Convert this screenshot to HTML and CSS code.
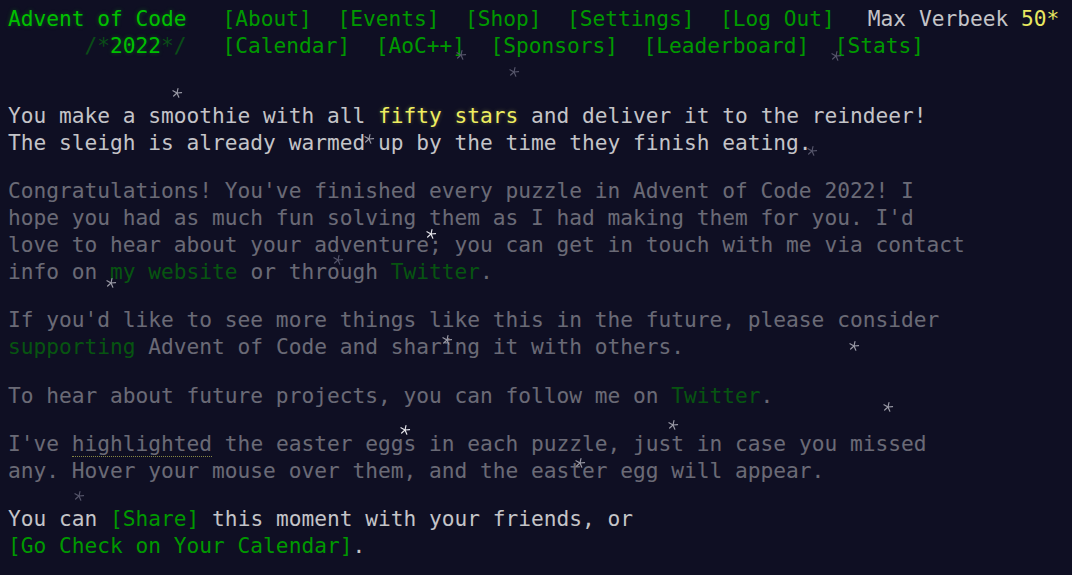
FILE: index.html
```html
<!DOCTYPE html>
<html lang="en">
<head>
<meta charset="utf-8">
<title>Advent of Code 2022</title>
<link rel="stylesheet" href="styles.css">
</head>
<body>
<svg class="defs" width="0" height="0" aria-hidden="true">
  <defs>
    <symbol id="flake" viewBox="-6 -6 12 12">
      <g stroke="currentColor" stroke-width="1.3" stroke-linecap="round">
        <line x1="0" y1="0" x2="0" y2="-5"/>
        <line x1="0" y1="0" x2="4.8" y2="-1.5"/>
        <line x1="0" y1="0" x2="2.9" y2="4"/>
        <line x1="0" y1="0" x2="-2.9" y2="4"/>
        <line x1="0" y1="0" x2="-4.8" y2="-1.5"/>
      </g>
    </symbol>
  </defs>
</svg>
<header>
  <div class="head-row">
    <h1 class="title"><a href="#" class="glow">Advent of Code</a></h1>
    <nav>
      <ul class="nav">
        <li><a href="#">[About]</a></li>
        <li><a href="#">[Events]</a></li>
        <li><a href="#">[Shop]</a></li>
        <li><a href="#">[Settings]</a></li>
        <li><a href="#">[Log Out]</a></li>
      </ul>
    </nav>
    <div class="user">Max Verbeek <span class="star-count">50*</span></div>
  </div>
  <div class="head-row">
    <h1 class="title event"><span class="wrap">/*</span><a href="#" class="glow">2022</a><span class="wrap">*/</span></h1>
    <nav>
      <ul class="nav">
        <li><a href="#">[Calendar]</a></li>
        <li><a href="#">[AoC++]</a></li>
        <li><a href="#">[Sponsors]</a></li>
        <li><a href="#">[Leaderboard]</a></li>
        <li><a href="#">[Stats]</a></li>
      </ul>
    </nav>
  </div>
</header>
<main>
  <article>
    <p>You make a smoothie with all <em class="star">fifty stars</em> and deliver it to the reindeer! The sleigh is already warmed up by the time they finish eating.</p>
    <p class="quiet">Congratulations! You've finished every puzzle in Advent of Code 2022! I hope you had as much fun solving them as I had making them for you. I'd love to hear about your adventure; you can get in touch with me via contact info on <a href="#">my website</a> or through <a href="#">Twitter</a>.</p>
    <p class="quiet">If you'd like to see more things like this in the future, please consider <a href="#">supporting</a> Advent of Code and sharing it with others.</p>
    <p class="quiet">To hear about future projects, you can follow me on <a href="#">Twitter</a>.</p>
    <p class="quiet">I've <span class="egg">highlighted</span> the easter eggs in each puzzle, just in case you missed any. Hover your mouse over them, and the easter egg will appear.</p>
    <p>You can <a href="#">[Share]</a> this moment with your friends, or <span class="nowrap"><a href="#">[Go Check on Your Calendar]</a>.</span></p>
  </article>
</main>
<div class="snow" aria-hidden="true">
  <svg class="flake f-mid" style="left:177px;top:93px"><use href="#flake"/></svg>
  <svg class="flake f-dim" style="left:461px;top:55px"><use href="#flake"/></svg>
  <svg class="flake f-dim" style="left:514px;top:72px"><use href="#flake"/></svg>
  <svg class="flake f-dim" style="left:836px;top:56px"><use href="#flake"/></svg>
  <svg class="flake f-mid" style="left:369px;top:139px"><use href="#flake"/></svg>
  <svg class="flake f-dim" style="left:812px;top:151px"><use href="#flake"/></svg>
  <svg class="flake f-bright" style="left:431px;top:234px"><use href="#flake"/></svg>
  <svg class="flake f-dim" style="left:338px;top:260px"><use href="#flake"/></svg>
  <svg class="flake f-mid" style="left:111px;top:283px"><use href="#flake"/></svg>
  <svg class="flake f-mid" style="left:447px;top:340px"><use href="#flake"/></svg>
  <svg class="flake f-mid" style="left:854px;top:346px"><use href="#flake"/></svg>
  <svg class="flake f-mid" style="left:888px;top:407px"><use href="#flake"/></svg>
  <svg class="flake f-bright" style="left:405px;top:430px"><use href="#flake"/></svg>
  <svg class="flake f-mid" style="left:673px;top:425px"><use href="#flake"/></svg>
  <svg class="flake f-mid" style="left:580px;top:463px"><use href="#flake"/></svg>
  <svg class="flake f-dim" style="left:79px;top:496px"><use href="#flake"/></svg>
</div>
</body>
</html>
```
FILE: styles.css
```css
html, body {
  margin: 0;
  background: #0f0f23;
}
body {
  position: relative;
  padding: 5px 8px 0;
  min-height: 570px;
  box-sizing: border-box;
  font-family: "DejaVu Sans Mono", "Liberation Mono", monospace;
  font-size: 21.2px;
  line-height: 27px;
  color: #c4c4c8;
  overflow: hidden;
}
.defs {
  position: absolute;
}
a {
  color: #009900;
  text-decoration: none;
}
header {
  display: flex;
  flex-direction: column;
}
.head-row {
  display: flex;
  align-items: baseline;
  white-space: nowrap;
}
.title {
  margin: 0 36px 0 0;
  width: 14ch;
  font-size: inherit;
  font-weight: normal;
  text-align: right;
}
.title a, .glow {
  color: #00c000;
  text-shadow: 0 0 4px rgba(0, 204, 0, 0.35);
}
.title .wrap {
  color: #00cc00;
  opacity: 0.33;
}
.nav {
  display: flex;
  gap: 2ch;
  list-style: none;
  margin: 0;
  padding: 0;
}
.user {
  margin-left: 33px;
  color: #c4c4c8;
}
.star-count {
  color: #e8e860;
}
main {
  padding-top: 43px;
}
article {
  max-width: 75.3ch;
}
article p {
  margin: 0 0 1em;
}
.star {
  font-style: normal;
  color: #eeee60;
  text-shadow: 0 0 4px rgba(255, 255, 102, 0.3);
}
.quiet {
  opacity: 0.5;
}
.egg {
  border-bottom: 1px dotted #ffff66;
}
.nowrap {
  white-space: nowrap;
}
.snow {
  position: absolute;
  inset: 0;
  pointer-events: none;
}
.flake {
  position: absolute;
  width: 11px;
  height: 11px;
  transform: translate(-50%, -50%) rotate(12deg);
}
.f-dim { color: #55556a; }
.f-mid { color: #9a9aa6; }
.f-bright { color: #e4e4ea; }
```
